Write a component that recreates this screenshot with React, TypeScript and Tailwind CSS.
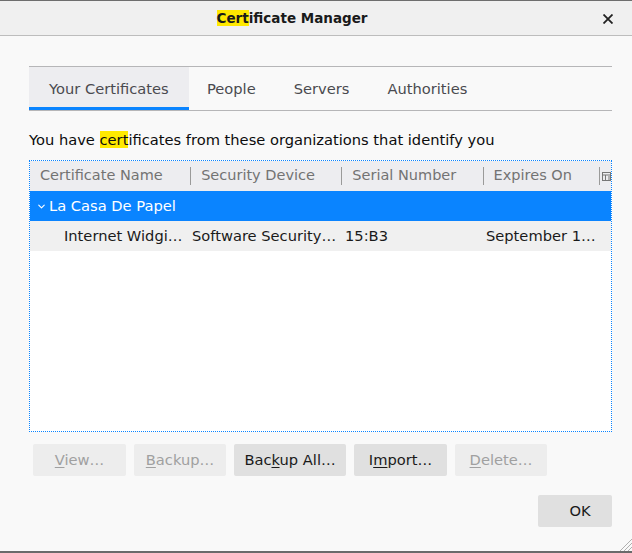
import { ChevronDown } from "lucide-react";

const font = "font-['DejaVu_Sans',sans-serif]";

const columns = [
  { label: "Certificate Name", width: "w-[161px]" },
  { label: "Security Device", width: "w-[152px]" },
  { label: "Serial Number", width: "w-[142px]" },
  { label: "Expires On", width: "w-[117px]" },
];

function AccessLabel({ text, hot }: { text: string; hot: number }) {
  return (
    <>
      {text.slice(0, hot)}
      <span className="underline underline-offset-2">{text[hot]}</span>
      {text.slice(hot + 1)}
    </>
  );
}

function Button({
  text,
  hot,
  disabled,
  width,
  extra = "",
}: {
  text: string;
  hot?: number;
  disabled?: boolean;
  width: string;
  extra?: string;
}) {
  return (
    <button
      className={`h-[32px] ${width} rounded-[2px] text-[14.67px] ${extra} ${
        disabled ? "bg-[#ededed] text-[#a0a0a0]" : "bg-[#e0e0e0] text-[#1a1a1a]"
      }`}
    >
      {hot === undefined ? text : <AccessLabel text={text} hot={hot} />}
    </button>
  );
}

function Tabs() {
  const tabs = ["Your Certificates", "People", "Servers", "Authorities"];
  return (
    <div className="flex h-[45px] border-t border-b border-[#b6b6b8]">
      {tabs.map((t, i) => (
        <div
          key={t}
          className={`flex items-center border-b-[3px] pt-[4px] text-[14.67px] text-[#4a4a4f] ${
            i === 0
              ? "w-[160px] border-[#0a84ff] bg-[#ededf0] px-[20px]"
              : "border-transparent pl-[18px] pr-[20px]"
          }`}
        >
          {t}
        </div>
      ))}
    </div>
  );
}

function CertTree() {
  return (
    <div className="mt-[10px] flex h-[272px] flex-col border border-dotted border-[#0a84ff] bg-white">
      <div className="flex h-[30px] items-center bg-[#ededf0] text-[14.5px] text-[#737373]">
        {columns.map((c, i) => (
          <div key={c.label} className={`flex h-full items-center ${c.width}`}>
            {i > 0 && <span className="mr-[10px] h-[18px] w-px bg-[#9a9a9a]" />}
            <span className={i === 0 ? "pl-[10px]" : ""}>{c.label}</span>
          </div>
        ))}
        <div className="flex h-full items-center">
          <span className="h-[18px] w-px bg-[#9a9a9a]" />
          <svg width="9" height="9" viewBox="0 0 9 9" className="ml-[2px]" fill="none" stroke="#777">
            <rect x="0.5" y="0.5" width="8" height="8" />
            <path d="M0.5 3h8M3.5 3v5.5M6 5h2M6 7h2" />
          </svg>
        </div>
      </div>
      <div className="flex h-[30px] items-center bg-[#0a84ff] text-[14.67px] text-white">
        <ChevronDown size={11} strokeWidth={2.5} className="ml-[6px] mr-[2px]" />
        La Casa De Papel
      </div>
      <div className="flex h-[30px] items-center bg-[#f0f0f0] text-[14.67px] text-[#1a1a1a]">
        <span className="w-[162px] pl-[34px]">Internet Widgi…</span>
        <span className="w-[153px]">Software Security…</span>
        <span className="w-[141px]">15:B3</span>
        <span>September 1…</span>
      </div>
    </div>
  );
}

export default function App() {
  return (
    <div className={`relative flex h-[553px] w-[632px] flex-col overflow-hidden bg-[#f9f9f9] ${font}`}>
      <div className="h-px bg-[#6e6e6e]" />
      <div className="relative flex h-[35px] items-center justify-center border-b border-[#bdbdbd] bg-[#f0f0f0] pr-[48px]">
        <span className="text-[13.5px] font-bold text-[#1a1a1a]">
          <span className="bg-[#ffe900]">Cert</span>ificate Manager
        </span>
        <svg width="10" height="10" viewBox="0 0 10 10" className="absolute right-[19px] top-[13px]" stroke="#222" strokeWidth="1.8">
          <path d="M0.5 0.5l9 9M9.5 0.5l-9 9" />
        </svg>
      </div>
      <div className="flex flex-1 flex-col pl-[29px] pr-[20px] pt-[30px]">
        <Tabs />
        <p className="mt-[19px] text-[14.67px] leading-[20px] text-[#0c0c0d]">
          You have <span className="bg-[#ffe900]">cert</span>ificates from these organizations that identify you
        </p>
        <CertTree />
        <div className="mt-[12px] flex gap-[8px] pl-[4px]">
          <Button text="View…" hot={0} disabled width="w-[93px]" />
          <Button text="Backup…" hot={0} disabled width="w-[92px]" />
          <Button text="Backup All…" hot={3} width="w-[112px]" />
          <Button text="Import…" hot={1} width="w-[93px]" />
          <Button text="Delete…" hot={0} disabled width="w-[92px]" />
        </div>
        <div className="mt-[19px] flex justify-end">
          <Button text="OK" width="w-[74px]" extra="pl-[10px]" />
        </div>
      </div>
      <svg width="14" height="14" viewBox="0 0 14 14" className="absolute bottom-[2px] right-0" stroke="#b0b0b0" strokeWidth="1">
        <path d="M14 2L2 14M14 6L6 14M14 10L10 14" />
      </svg>
      <div className="h-[2px] bg-[#6a6a6a]" />
    </div>
  );
}
